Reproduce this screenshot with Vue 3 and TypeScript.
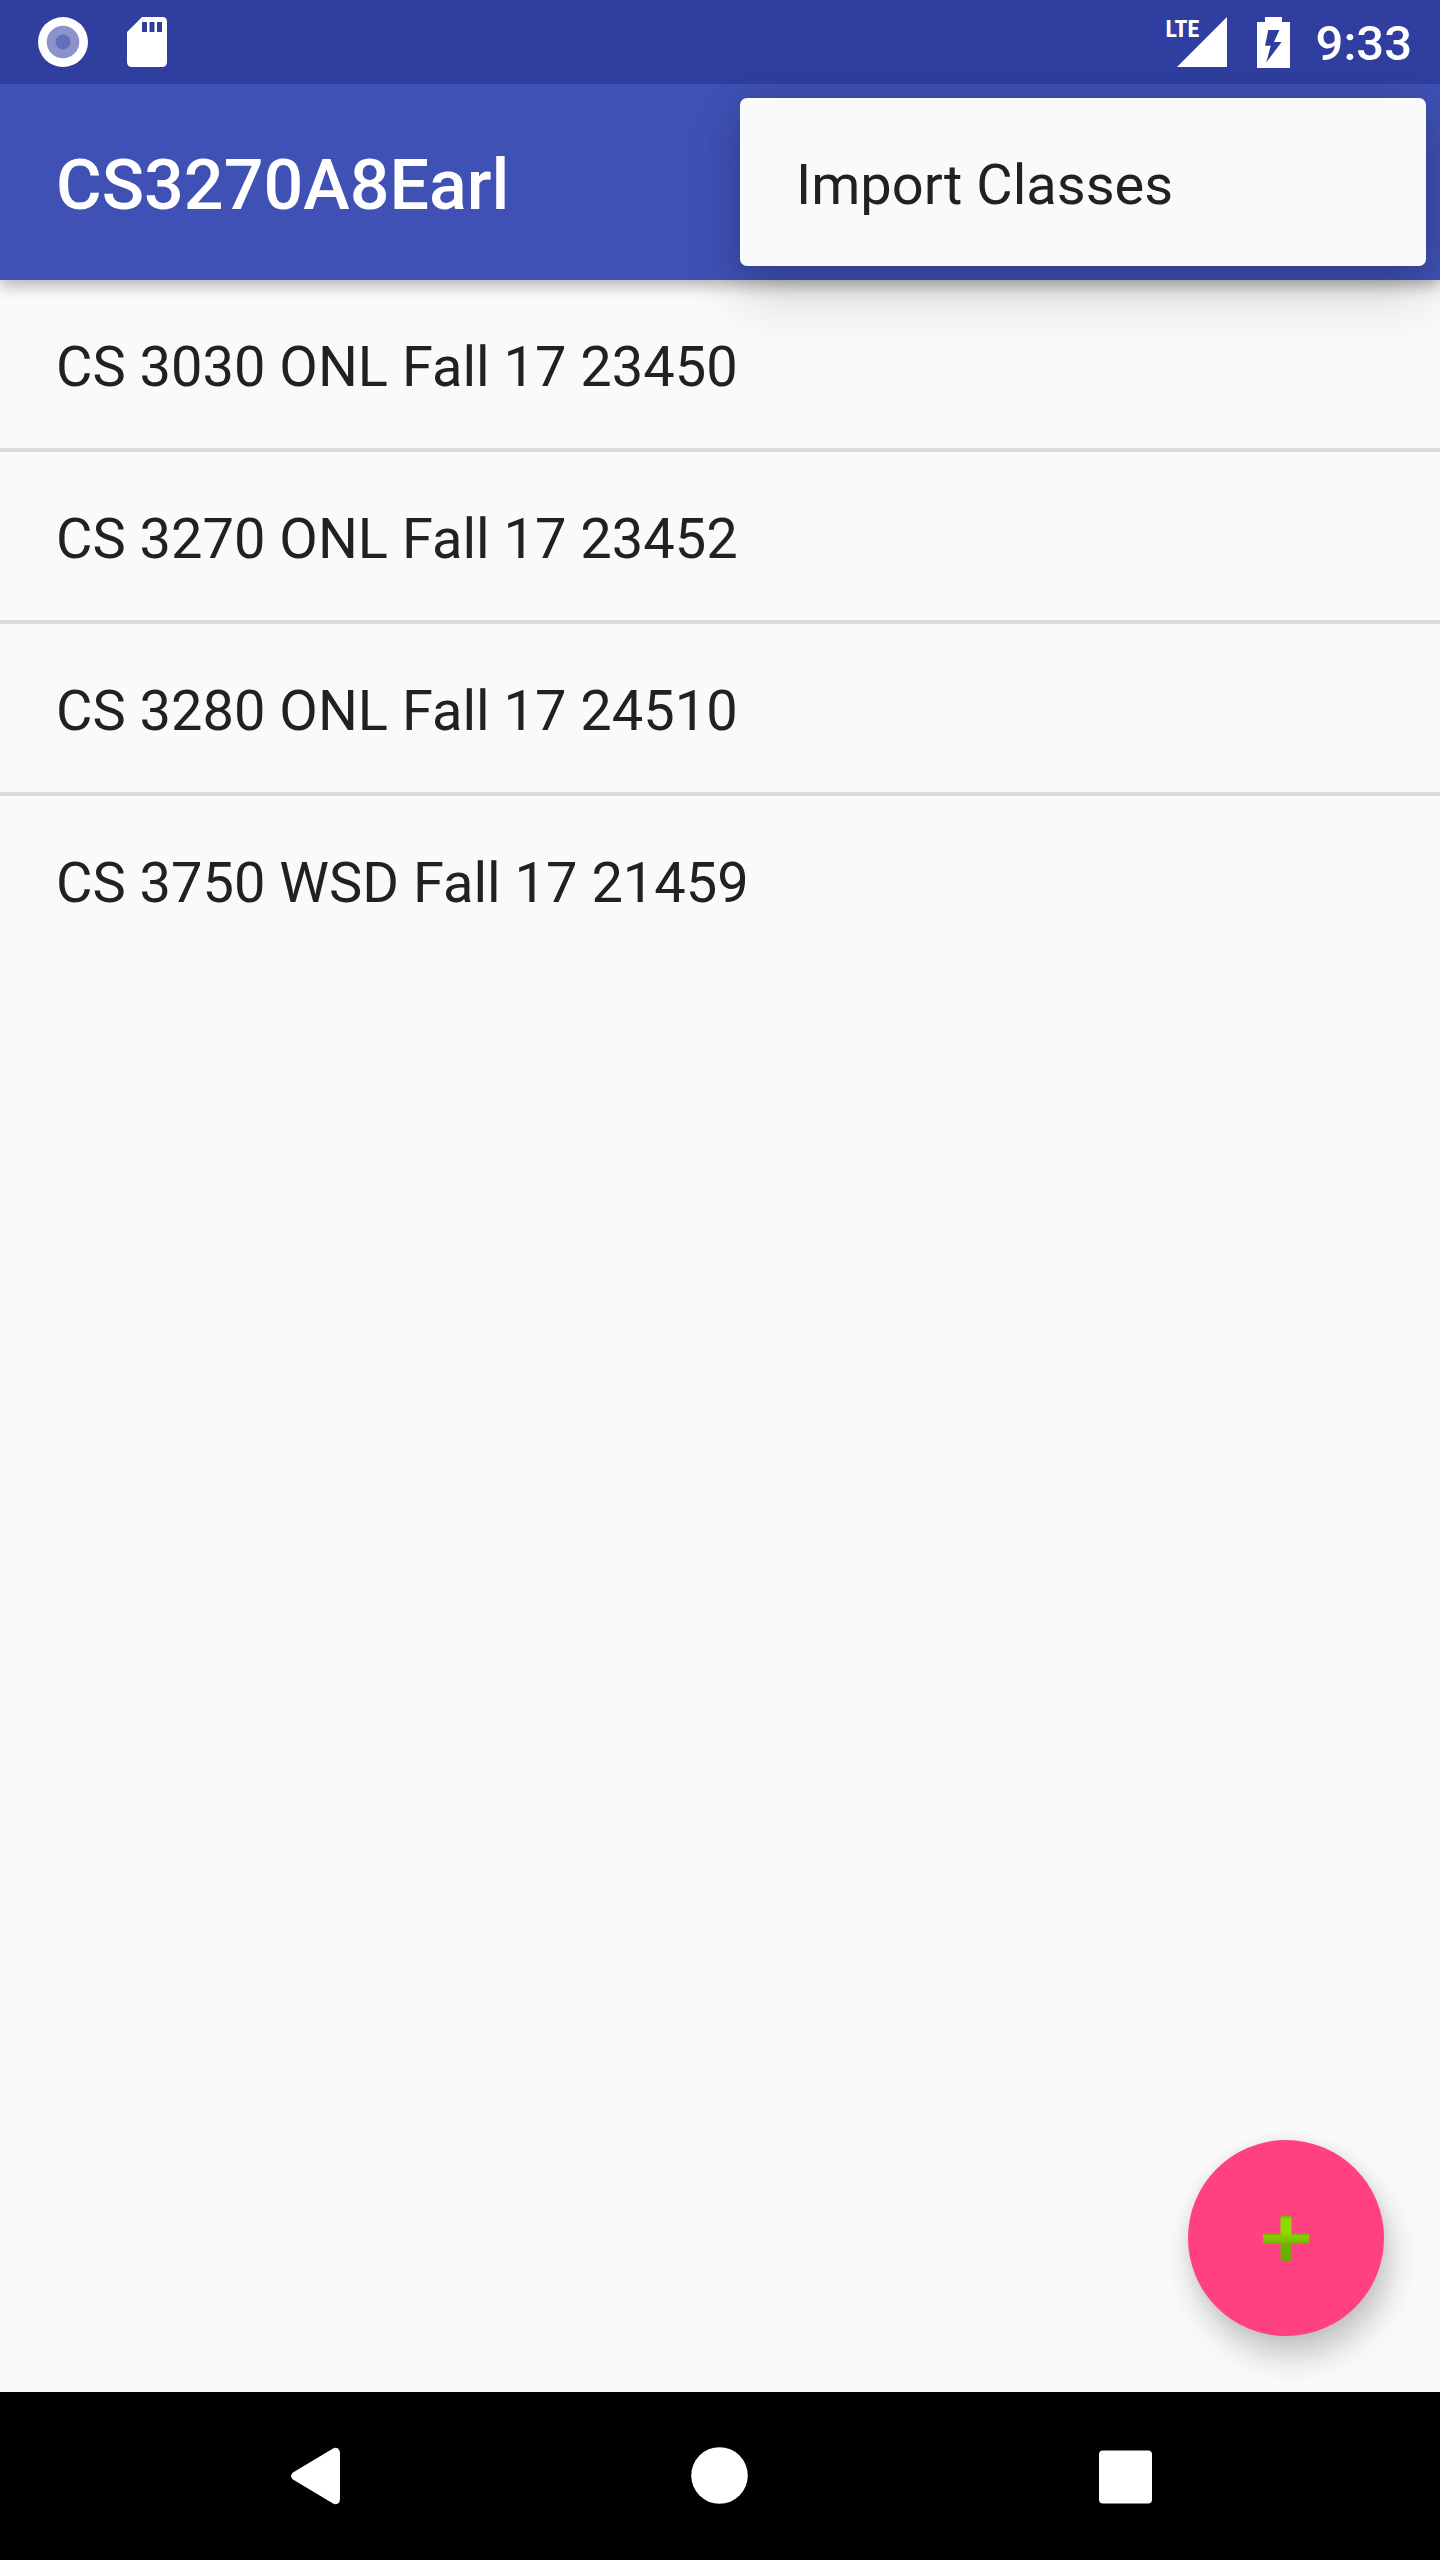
<script setup lang="ts">
interface ClassEntry {
  id: number
  label: string
}

const title = 'CS3270A8Earl'

const classes: ClassEntry[] = [
  { id: 23450, label: 'CS 3030 ONL Fall 17 23450' },
  { id: 23452, label: 'CS 3270 ONL Fall 17 23452' },
  { id: 24510, label: 'CS 3280 ONL Fall 17 24510' },
  { id: 21459, label: 'CS 3750 WSD Fall 17 21459' },
]

const menuItems: string[] = ['Import Classes']
</script>

<template>
  <div class="screen">
    <div class="status-bar">
      <div class="status-group notifications">
        <svg class="icon-round" viewBox="0 0 50 50" aria-hidden="true">
          <circle cx="25" cy="25" r="25" fill="#fff" />
          <circle cx="25" cy="25" r="16.3" fill="#8b93ca" />
          <circle cx="25" cy="25" r="7.5" fill="#646fb7" />
        </svg>
        <svg class="icon-sd" viewBox="0 0 40 50" aria-hidden="true">
          <path
            fill="#fff"
            fill-rule="evenodd"
            d="M15 0H35.500Q40 0 40 5V45Q40 50 35 50H5Q0 50 0 45V15ZM15 5V15H20V5ZM22.500 5V15H27.500V5ZM30 5V15H35V5Z"
          />
        </svg>
      </div>
      <div class="status-group system">
        <div class="signal">
          <span class="network">LTE</span>
          <svg class="icon-signal" viewBox="0 0 50 50" aria-hidden="true">
            <path fill="#fff" d="M50 0V50H0Z" />
          </svg>
        </div>
        <svg class="icon-battery" viewBox="0 0 33 51" aria-hidden="true">
          <path
            fill="#fff"
            fill-rule="evenodd"
            d="M8 0H25V5H33V51H0V5H8ZM11.300 13L8 28.700H13.700L9.300 45.500L24.600 25H17L22.400 13Z"
          />
        </svg>
        <time class="clock">9:33</time>
      </div>
    </div>

    <header class="app-bar">
      <h1 class="title">{{ title }}</h1>
      <div class="menu" role="menu">
        <button v-for="item in menuItems" :key="item" class="menu-item" type="button" role="menuitem">
          {{ item }}
        </button>
      </div>
    </header>

    <main class="content">
      <ul class="class-list">
        <li v-for="entry in classes" :key="entry.id" class="class-row">{{ entry.label }}</li>
      </ul>
      <button class="fab" type="button" aria-label="Add class">
        <svg class="icon-plus" viewBox="0 0 46 46" aria-hidden="true">
          <defs>
            <linearGradient id="plus-fill" x1="0" y1="0" x2="0" y2="1">
              <stop offset="0" stop-color="#6fa000" />
              <stop offset="0.08" stop-color="#8ad800" />
              <stop offset="0.36" stop-color="#8fdc00" />
              <stop offset="0.65" stop-color="#74b000" />
              <stop offset="1" stop-color="#6ca800" />
            </linearGradient>
          </defs>
          <path
            fill="url(#plus-fill)"
            d="M19 0H27Q28.500 0 28.500 2V18H44Q46 18 46 20V27Q46 28.500 44 28.500H28.500V44Q28.500 46 27 46H19Q17.500 46 17.500 44V28.500H2Q0 28.500 0 27V20Q0 18 2 18H17.500V2Q17.500 0 19 0Z"
          />
          <path fill="#6fa000" opacity="0.7" d="M1 18H17.500V20H1ZM28.500 18H45V20H28.500Z" />
        </svg>
      </button>
    </main>

    <nav class="nav-bar" aria-label="System">
      <button class="nav-button" type="button" aria-label="Back">
        <svg class="icon-nav" viewBox="0 0 60 60" aria-hidden="true">
          <path
            fill="#fff"
            d="M8 26.500L48 2.400Q50.500 1 53 2.500Q55 4 55 7V53Q55 56 53 57.500Q50.500 59 48 57.600L8 33.500Q6 32 6 30Q6 28 8 26.500Z"
          />
        </svg>
      </button>
      <button class="nav-button" type="button" aria-label="Home">
        <svg class="icon-nav" viewBox="0 0 60 60" aria-hidden="true">
          <circle cx="29.500" cy="29.500" r="28.300" fill="#fff" />
        </svg>
      </button>
      <button class="nav-button" type="button" aria-label="Recent apps">
        <svg class="icon-nav" viewBox="0 0 60 60" aria-hidden="true">
          <rect x="4" y="4.500" width="53" height="53" rx="4" fill="#fff" />
        </svg>
      </button>
    </nav>
  </div>
</template>

<style>
body {
  margin: 0;
}
</style>

<style scoped>
.screen {
  display: flex;
  flex-direction: column;
  min-height: 100vh;
  overflow: hidden;
  background: #fafafa;
  color: #212121;
  font-family: Roboto, sans-serif;
}

button {
  margin: 0;
  padding: 0;
  border: 0;
  background: none;
  color: inherit;
  font: inherit;
}

svg {
  display: block;
  flex: none;
}

.status-bar {
  position: relative;
  z-index: 1;
  display: flex;
  justify-content: space-between;
  height: 84px;
  padding: 0 28px 0 38px;
  background: #303f9f;
  color: #fff;
}

.status-group {
  display: flex;
  align-items: center;
}

.notifications {
  gap: 39px;
}

.icon-round {
  width: 50px;
  height: 50px;
}

.icon-sd {
  width: 40px;
  height: 50px;
}

.signal {
  position: relative;
  padding-left: 11px;
  margin-right: 30px;
}

.network {
  position: absolute;
  top: 0;
  left: 0;
  font-family: "Roboto Condensed", "Liberation Sans Narrow", Roboto, sans-serif;
  font-size: 24px;
  font-weight: 700;
  line-height: 24px;
}

.icon-signal {
  width: 50px;
  height: 50px;
}

.icon-battery {
  width: 33px;
  height: 51px;
  margin-right: 26px;
}

.clock {
  padding-top: 4px;
  font-size: 49px;
  font-weight: 500;
  line-height: 60px;
}

.app-bar {
  position: relative;
  display: flex;
  align-items: center;
  height: 196px;
  padding: 0 56px;
  background: #3f51b5;
  box-shadow: 0 6px 14px rgba(0, 0, 0, 0.28);
  color: #fff;
}

.title {
  margin: 0;
  padding-top: 6px;
  font-size: 70px;
  font-weight: 500;
  line-height: 84px;
}

/* Overflow menu floats above both bars. */
.menu {
  position: absolute;
  top: 14px;
  right: 14px;
  z-index: 2;
  width: 686px;
  border-radius: 7px;
  background: #fafafa;
  box-shadow: 0 28px 56px rgba(0, 0, 0, 0.17), 0 0 36px rgba(0, 0, 0, 0.12);
  color: #212121;
}

.menu-item {
  display: block;
  width: 100%;
  height: 168px;
  padding: 6px 56px 0;
  font-size: 56px;
  line-height: 66px;
  text-align: left;
}

.content {
  position: relative;
  flex: 1;
}

.class-list {
  margin: 0;
  padding: 0;
  list-style: none;
}

.class-row {
  display: flex;
  align-items: center;
  height: 168px;
  padding: 6px 56px 0;
  box-sizing: border-box;
  font-size: 56px;
  line-height: 66px;
}

.class-row + .class-row {
  height: 172px;
  border-top: 4px solid #dadada;
}

.fab {
  position: absolute;
  right: 56px;
  bottom: 56px;
  display: flex;
  align-items: center;
  justify-content: center;
  width: 196px;
  height: 196px;
  border-radius: 50%;
  background: #ff4081;
  box-shadow: 6px 20px 32px rgba(0, 0, 0, 0.22), 0 0 14px rgba(0, 0, 0, 0.06);
}

.icon-plus {
  width: 46px;
  height: 46px;
}

.nav-bar {
  position: relative;
  display: flex;
  justify-content: space-between;
  height: 168px;
  padding: 0 175px;
  background: #000;
}

.nav-button {
  display: flex;
  align-items: center;
  justify-content: center;
  width: 280px;
}

.icon-nav {
  width: 60px;
  height: 60px;
}
</style>
